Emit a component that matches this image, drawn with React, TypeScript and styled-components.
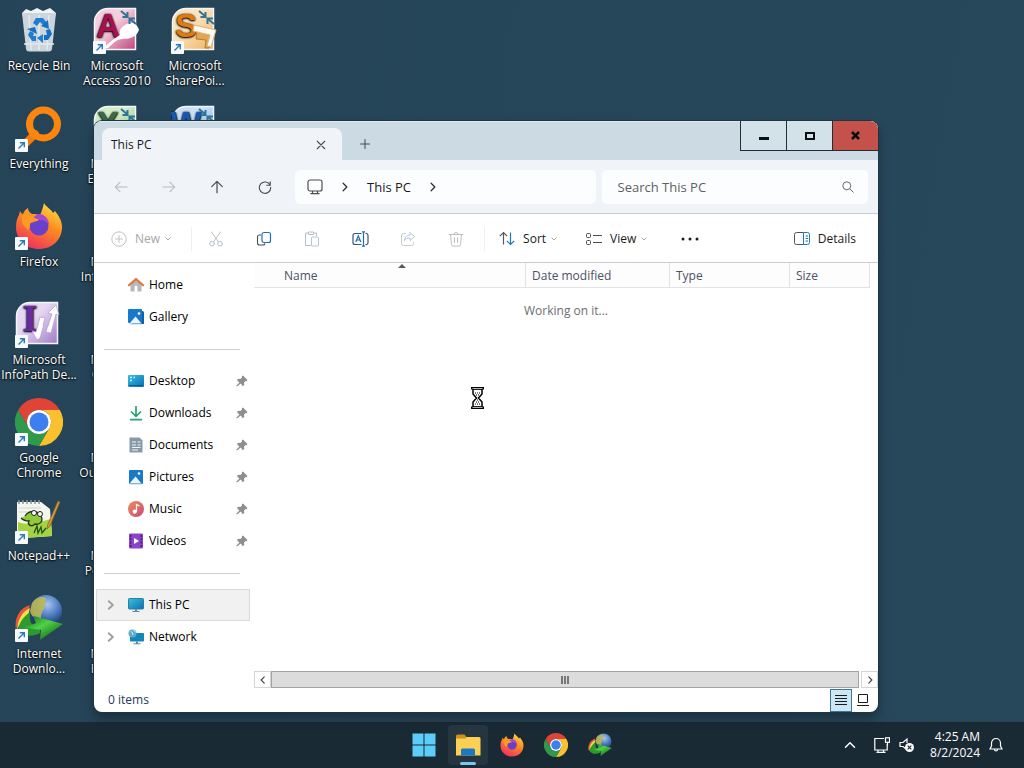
import React, { useState } from 'react'
import styled, { createGlobalStyle, css } from 'styled-components'

const GlobalStyle = createGlobalStyle`
  * {
    box-sizing: border-box;
  }

  body {
    margin: 0;
    font-family: 'Open Sans', 'Noto Sans', sans-serif;
    font-size: 12px;
    line-height: 16px;
    color: #1b1b1b;
    background-color: #264559;
  }

  button, input {
    font: inherit;
    color: inherit;
  }

  svg {
    display: block;
    flex: none;
  }
`;

const Screen = styled.div`
  display: flex;
  flex-direction: column;
  min-height: 100vh;
`;

const Desktop = styled.main`
  position: relative;
  flex: 1;
  background: linear-gradient(100deg, #254458, #27485b);
`;

const IconGrid = styled.div`
  display: grid;
  grid-auto-flow: column;
  grid-template-rows: repeat(7, 98px);
  grid-auto-columns: 78px;
  padding-top: 6px;
`;

const Shortcut = styled.button`
  display: flex;
  flex-direction: column;
  align-items: center;
  justify-content: flex-start;
  gap: 4px;
  padding: 0;
  border: none;
  background: none;
  color: #fff;
  line-height: 15px;
  white-space: pre;
  text-shadow: 0 1px 2px #000, 0 0 2px #000;
`;

const Window = styled.section`
  position: absolute;
  top: 121px;
  right: 146px;
  bottom: 9px;
  left: 94px;
  display: flex;
  flex-direction: column;
  min-width: 640px;
  overflow: hidden;
  border-radius: 8px;
  background-color: #fff;
  box-shadow: 0 0 0 1px #1d3644, 0 6px 12px rgba(0, 0, 0, 0.35);
`;

const TitleBar = styled.header`
  display: flex;
  align-items: flex-start;
  height: 39px;
  padding-left: 8px;
  background-color: #ccdbe3;
  box-shadow: inset 0 1px #dde8ee;
`;

const Tab = styled.div`
  display: flex;
  align-items: center;
  justify-content: space-between;
  width: 240px;
  height: 32px;
  margin-top: 7px;
  padding: 1px 11px 0 9px;
  border-radius: 8px 8px 0 0;
  background-color: #f0f4f9;
`;

const PlainButton = styled.button`
  display: flex;
  align-items: center;
  justify-content: center;
  padding: 0;
  border: none;
  background: none;
`;

const TabButton = styled(PlainButton)`
  width: 20px;
  height: 20px;
`;

const NewTabButton = styled(TabButton)`
  margin: 13px auto 0 13px;
`;

const CaptionButton = styled(PlainButton)<{ $close?: boolean }>`
  width: 46px;
  height: 30px;
  border-bottom: 1px solid #1f2f3a;
  border-left: 1px solid #1f2f3a;
  background-color: ${props => (props.$close ? '#c5524a' : '#d3e1e8')};
`;

const NavRow = styled.div`
  display: flex;
  align-items: center;
  gap: 6px;
  height: 54px;
  padding: 0 10px 0 3px;
  border-bottom: 1px solid #cacdd0;
  background-color: #f0f4f9;
`;

const NavButtons = styled.div`
  display: flex;
`;

const ToolButton = styled(PlainButton)`
  width: 48px;
  height: 32px;
`;

const AddressBar = styled.nav`
  display: flex;
  flex: 276;
  align-items: center;
  height: 34px;
  padding: 0 12px;
  border-radius: 5px;
  background-color: #fcfdfe;
  font-size: 13px;
`;

const Crumb = styled(PlainButton)`
  margin: 0 16px;
`;

const SearchBox = styled.label`
  display: flex;
  flex: 236;
  align-items: center;
  height: 34px;
  padding: 0 14px 0 16px;
  border-radius: 5px;
  background-color: #fcfdfe;
`;

const SearchInput = styled.input`
  flex: 1;
  min-width: 0;
  padding: 0;
  border: none;
  outline: none;
  background: none;
  font-size: 13px;

  &::placeholder {
    color: #5f6063;
    opacity: 1;
  }
`;

const Toolbar = styled.div`
  display: flex;
  align-items: center;
  height: 49px;
  padding: 1px 22px 0 17px;
  border-bottom: 1px solid #cacdd0;
`;

const TextButton = styled(PlainButton)<{ $faded?: boolean }>`
  gap: 4px;
  height: 32px;
  color: ${props => (props.$faded ? '#a5a6a8' : '#1b1b1b')};

  svg:first-child {
    margin-right: 4px;
  }
`;

const ToolGroup = styled.div`
  display: flex;
  gap: 28px;
  margin: 0 18px 0 14px;
`;

const Divider = styled.div<{ $gap: number }>`
  width: 1px;
  height: 24px;
  margin-left: ${props => props.$gap}px;
  background-color: #f0f0f1;
`;

const Spacer = styled.div`
  flex: 1;
`;

const Body = styled.div`
  display: flex;
  flex: 1;
  min-height: 0;
`;

const Sidebar = styled.nav`
  width: 160px;
  padding: 6px 4px 0 2px;
`;

const SideItem = styled.button<{ $selected?: boolean }>`
  display: grid;
  grid-template-columns: 24px 16px 1fr 12px;
  column-gap: 5px;
  align-items: center;
  width: 100%;
  height: 32px;
  padding: 0 1px 0 2px;
  border: 1px solid transparent;
  background: none;
  text-align: left;
  color: #000;

  ${props => props.$selected && css`
    border-color: #d9d9d9;
    background-color: #f1f1f1;
  `}
`;

const ExpanderSlot = styled.span`
  padding-left: 6px;
`;

const SideRule = styled.hr`
  width: 136px;
  height: 1px;
  margin: 16px 8px 15px;
  border: none;
  background-color: #cfcfcf;
`;

const Content = styled.div`
  position: relative;
  display: flex;
  flex: 1;
  flex-direction: column;
  min-width: 0;
`;

const FileTable = styled.table`
  width: calc(100% - 8px);
  table-layout: fixed;
  border-collapse: separate;
  border-spacing: 0;
`;

const HeadCell = styled.th<{ $width?: number; $first?: boolean }>`
  position: relative;
  width: ${props => (props.$width ? props.$width + 'px' : 'auto')};
  height: 25px;
  padding: 1px 0 0 ${props => (props.$first ? 30 : 6)}px;
  border-right: 1px solid #e3e3e6;
  border-bottom: 1px solid #e3e3e6;
  background-color: #fdfdfe;
  font-weight: 400;
  text-align: left;
  color: #4c5067;
`;

const SortMark = styled.svg`
  position: absolute;
  top: 1px;
  left: calc(50% + 8px);
`;

const Message = styled.p`
  flex: 1;
  margin: 15px 0 0;
  text-align: center;
  color: #6d6d6d;
`;

const WaitCursor = styled.svg`
  position: absolute;
  top: 124px;
  left: 217px;
`;

const ScrollBar = styled.div`
  display: flex;
  height: 17px;
`;

const ScrollButton = styled(PlainButton)`
  width: 17px;
  border: 1px solid #d5d5d5;
  background-color: #fff;
`;

const ScrollThumb = styled.div`
  display: flex;
  flex: 1;
  align-items: center;
  justify-content: center;
  margin-right: 2px;
  border: 1px solid #a3a3a3;
  background-color: #dcdcdc;
`;

const StatusBar = styled.footer`
  display: flex;
  align-items: center;
  height: 24px;
  padding: 0 4px 0 14px;
  color: #1e395b;
`;

const StatusText = styled.span`
  margin-right: auto;
`;

const ViewButton = styled(PlainButton)<{ $active: boolean }>`
  width: 22px;
  height: 23px;
  border: 1px solid ${props => (props.$active ? '#3f7896' : 'transparent')};
  background-color: ${props => (props.$active ? '#cde6f5' : 'transparent')};
`;

const Taskbar = styled.footer`
  display: grid;
  grid-template-columns: 1fr auto 1fr;
  align-items: center;
  height: 47px;
  border-top: 1px solid #2d434f;
  background-color: #1a2a35;
  color: #fff;
`;

const TaskButtons = styled.div`
  display: flex;
  grid-column: 2;
  gap: 4px;
`;

const TaskButton = styled(PlainButton)<{ $active?: boolean }>`
  position: relative;
  width: 40px;
  height: 40px;
  border-radius: 4px;
  background-color: ${props => (props.$active ? '#263640' : 'transparent')};

  ${props => props.$active && css`
    &::after {
      content: '';
      position: absolute;
      bottom: 0;
      left: 12px;
      width: 16px;
      height: 3px;
      border-radius: 2px;
      background-color: #7cc4ee;
    }
  `}
`;

const Tray = styled.div`
  display: flex;
  align-items: center;
  justify-content: flex-end;
  gap: 9px;
  padding-right: 21px;
`;

const TrayButton = styled(PlainButton)<{ $spaced?: boolean }>`
  margin-right: ${props => (props.$spaced ? '9px' : '0')};
`;

const Clock = styled.time`
  margin-left: 6px;
  text-align: right;
`;

/* ---------- line icons ---------- */

const Line = ({ d, size = 16, color = '#4a4d50', width = 1 }: any) => (
  <svg width={size} height={size} viewBox="0 0 16 16" fill="none" stroke={color} strokeWidth={width} strokeLinecap="round" strokeLinejoin="round">
    <path d={d} />
  </svg>
);

const Caret = () => (
  <svg width="8" height="6" viewBox="0 0 8 6" fill="none" stroke="#a8a9ab">
    <path d="M1.500 1.500l2.500 2.500 2.500-2.500" />
  </svg>
);

const CrumbArrow = () => <Line size={12} width={1.6} color="#2b2d2f" d="M5.500 3l5 5-5 5" />;

const CopyIcon = () => (
  <svg width="16" height="16" viewBox="0 0 16 16" fill="none">
    <path d="M5 4H3.200A1.800 1.800 0 0 0 1.500 5.800V12a2 2 0 0 0 2 2H7a2 2 0 0 0 2-1.500" stroke="#44505c" strokeWidth="1.100" />
    <rect x="6" y="1.500" width="8.500" height="10" rx="2" stroke="#1f6fb0" strokeWidth="1.200" />
  </svg>
);

const PasteIcon = () => (
  <svg width="16" height="16" viewBox="0 0 16 16" fill="none" stroke="#bcbec1">
    <path d="M4.500 2H1.500v12.500H7M9.500 2h3v3M4.500 1h5v2.500h-5z" />
    <rect x="7.500" y="6" width="7" height="9" rx="1" stroke="#b4c4d4" />
  </svg>
);

const RenameIcon = () => (
  <svg width="17" height="16" viewBox="0 0 17 16" fill="none" stroke="#1f6fb0" strokeWidth="1.200">
    <path d="M9.500 2.500H3a2 2 0 0 0-2 2v7a2 2 0 0 0 2 2h6.500M13.500 2.500a2 2 0 0 1 2.500 2v7a2 2 0 0 1-2.500 2" stroke="#34577a" />
    <path d="M11.500 1v14M10 .8h3M10 15.200h3M3.800 11L6.300 4.800 8.800 11M4.600 9h3.400" />
  </svg>
);

const ShareIcon = () => (
  <svg width="16" height="16" viewBox="0 0 16 16" fill="none" strokeLinejoin="round">
    <path d="M6 2.500H3.500a2 2 0 0 0-2 2v8a2 2 0 0 0 2 2h8a2 2 0 0 0 2-2V11" stroke="#c6cbd0" />
    <path d="M10 1.500l4.500 4-4.500 4V7C7 7 5.500 8 4.300 9.800 4.500 6.500 6.500 4.200 10 4z" stroke="#b4cbe0" />
  </svg>
);

const TrashIcon = () => (
  <svg width="16" height="16" viewBox="0 0 16 16" fill="none" stroke="#bcbec1">
    <path d="M1 3.500h14M6 3.500a2 2 0 0 1 4 0M2.500 3.500l1 10a1.500 1.500 0 0 0 1.500 1.500h6a1.500 1.500 0 0 0 1.500-1.500l1-10M6.500 6.500v5.500M9.500 6.500v5.500" />
  </svg>
);

const CutIcon = () => (
  <svg width="16" height="16" viewBox="0 0 16 16" fill="none" stroke="#bcbec1" strokeLinecap="round">
    <path d="M3.500 1l7 10M12.500 1l-7 10" />
    <circle cx="4" cy="12.700" r="2.300" stroke="#b4c4d4" />
    <circle cx="12" cy="12.700" r="2.300" stroke="#b4c4d4" />
  </svg>
);

const SortIcon = () => (
  <svg width="16" height="16" viewBox="0 0 16 16" fill="none" strokeWidth="1.200">
    <path d="M4.500 13.500v-12M.800 5.200l3.700-3.700 3.700 3.700" stroke="#55595e" />
    <path d="M11.500 1.500v12M7.800 9.800l3.700 3.700 3.700-3.700" stroke="#1f78bd" />
  </svg>
);

const ViewIcon = () => (
  <svg width="16" height="14" viewBox="0 0 16 14" fill="none" stroke="#4a4d50">
    <rect x=".5" y="1.500" width="4" height="4" rx="1" />
    <rect x=".5" y="8.500" width="4" height="4" rx="1" />
    <path d="M7 3.500h9M7 10.500h9" />
  </svg>
);

const DetailsIcon = () => (
  <svg width="16" height="13" viewBox="0 0 16 13" fill="none">
    <path d="M9.500.5H2.500a2 2 0 0 0-2 2v8a2 2 0 0 0 2 2h7" stroke="#4a5560" />
    <path d="M9.500.5h4a2 2 0 0 1 2 2v8a2 2 0 0 1-2 2h-4zM11.500 4h2.500M11.500 6.500h2.500M11.500 9h2.500" stroke="#1f78bd" />
  </svg>
);

const PcOutlineIcon = () => (
  <svg width="16" height="16" viewBox="0 0 16 16" fill="none" stroke="#4a4d50" strokeWidth="1.200">
    <rect x="1" y="1" width="14" height="11" rx="2" />
    <path d="M5.500 12v2.500M10.500 12v2.500M3.500 14.700h9" />
  </svg>
);

/* ---------- sidebar icons ---------- */

const HomeIcon = () => (
  <svg width="16" height="16" viewBox="0 0 16 16">
    <path d="M2.500 7L8 2.500 13.500 7v7.500h-4V10a1.500 1.500 0 0 0-3 0v4.500h-4z" fill="#b5b9bd" />
    <path d="M1 8.300L8 2l7 6.300" fill="none" stroke="#e0763f" strokeWidth="2.200" strokeLinecap="round" strokeLinejoin="round" />
  </svg>
);

const PictureIcon = ({ stacked }: { stacked?: boolean }) => (
  <svg width="16" height="16" viewBox="0 0 16 16">
    {stacked && <path d="M4 2h10.500a1.500 1.500 0 0 1 1.500 1.500V15H4z" fill="#0f5ea8" />}
    <rect y={stacked ? 0 : 1} x={stacked ? 0 : 1} width="14" height="14" rx="1" fill="#1679cc" />
    <path d="M1.500 14.500L7.500 7.500l6 7z" fill="#eef7fd" />
    <path d="M1.500 14.500h12.500v.8H1.500z" fill="#7eb6e0" />
    <circle cx="11" cy="4.500" r="1.300" fill="#fff" />
  </svg>
);

const DesktopIcon = () => (
  <svg width="16" height="16" viewBox="0 0 16 16">
    <defs>
      <linearGradient id="desk" x1="0" y1="0" x2="1" y2="1">
        <stop offset="0" stopColor="#34bfe0" />
        <stop offset="1" stopColor="#0a70b8" />
      </linearGradient>
    </defs>
    <rect y="2" width="16" height="12" rx="1" fill="url(#desk)" />
    <path d="M2 4.500h2M2 7.500h2M5.500 4.500h1.500" stroke="#d9f5fd" strokeWidth="1.500" />
    <path d="M1 12.500h14" stroke="#075c98" />
  </svg>
);

const DownloadIcon = () => (
  <svg width="16" height="16" viewBox="0 0 16 16" fill="none" stroke="#22a672" strokeWidth="1.700">
    <path d="M8 1v10M3 6.500L8 11.300l5-4.800M2 14.700h12" />
  </svg>
);

const DocumentIcon = () => (
  <svg width="16" height="16" viewBox="0 0 16 16">
    <path d="M1.500.5h10l3 3v12h-13z" fill="#8699aa" />
    <path d="M4 5h4M4 8h4M9.500 5h3M9.500 8h3M4 10.500h8.500M4 13h6" stroke="#f2f6fa" strokeWidth="1.200" />
  </svg>
);

const MusicIcon = () => (
  <svg width="16" height="16" viewBox="0 0 16 16">
    <defs>
      <linearGradient id="music" x1="0" y1="0" x2="1" y2="1">
        <stop offset="0" stopColor="#ee8a5c" />
        <stop offset="1" stopColor="#c94a77" />
      </linearGradient>
    </defs>
    <circle cx="8" cy="8" r="8" fill="url(#music)" />
    <path d="M8.500 10.500V3.500l3 1.500" fill="none" stroke="#fff" strokeWidth="1.300" />
    <circle cx="6.700" cy="10.700" r="2.100" fill="#fff" />
  </svg>
);

const VideoIcon = () => (
  <svg width="16" height="16" viewBox="0 0 16 16">
    <rect x="1" y=".5" width="14" height="15" rx="1" fill="#8a45c8" />
    <path d="M2.700 2v12M13.300 2v12" stroke="#4d1f86" strokeWidth="1.600" strokeDasharray="2 1.300" />
    <path d="M6 5l5 3-5 3z" fill="#fff" />
  </svg>
);

const MonitorIcon = () => (
  <svg width="16" height="16" viewBox="0 0 16 16">
    <defs>
      <linearGradient id="mon" x1="0" y1="0" x2="1" y2="1">
        <stop offset="0" stopColor="#38c3dc" />
        <stop offset="1" stopColor="#0d6fae" />
      </linearGradient>
    </defs>
    <rect x=".5" y="1.500" width="15" height="10.500" rx=".8" fill="url(#mon)" stroke="#2b7fa5" />
    <path d="M7 12h2v2h2.500v1h-7v-1H7z" fill="#5b8aa3" />
  </svg>
);

const NetworkIcon = () => (
  <svg width="16" height="16" viewBox="0 0 16 16">
    <rect x="2" y="4" width="14" height="8.500" rx=".8" fill="#1486b8" />
    <circle cx="4.500" cy="4.500" r="4" fill="#5dabc8" />
    <path d="M2.500 2.500c2 .5 3 2 2 3.500M5.500 1c1 1.500 2 2 3 2" stroke="#d7f2f7" fill="none" />
    <path d="M8 12.500h2v1.700h2.500v1h-7v-1H8z" fill="#5b8aa3" />
  </svg>
);

const PinIcon = () => (
  <svg width="12" height="12" viewBox="0 0 12 12" fill="#8b8e91">
    <path d="M7 .6l4.500 4.500-1 1.200-1-.2-1.500 1.600.2 2.200L7 11.200 4.600 8.600 1.200 11.600l-.9-.9L3.400 7.400.9 5l1.300-1.300 2.200.2L6 2.400l-.2-.9z" />
  </svg>
);

/* ---------- desktop icons ---------- */

const ShortcutBadge = () => (
  <g>
    <rect y="35" width="13" height="13" rx="1" fill="#f7fafc" />
    <path d="M3.500 44.500l5.500-5.500M4.800 38.700h4.500v4.500" fill="none" stroke="#2f78b5" strokeWidth="1.400" />
  </g>
);

const FirefoxArt = ({ size }: { size: number }) => (
  <svg width={size} height={size} viewBox="0 0 48 48">
    <defs>
      <linearGradient id="ffa" x1=".8" y1="0" x2=".3" y2="1">
        <stop offset="0" stopColor="#ffdf43" />
        <stop offset=".45" stopColor="#ff8a1f" />
        <stop offset="1" stopColor="#ee2f62" />
      </linearGradient>
    </defs>
    <path d="M29 1c2 4 7 6 9 10l2-2c4 5 7 10 7 16 0 13-10 22-23 22S1 38 1 25c0-5 1-9 3-12l1-4c1 2 2 3 3 3 1-3 3-5 5-6 0 3 2 5 4 6 3 0 6 0 8 1 2-4 3-8 4-12z" fill="url(#ffa)" />
    <circle cx="24" cy="24" r="9.500" fill="#6a3fc9" />
    <path d="M25 12c5 1 9 5 9 11-2-3-5-5-9-5-3 0-5 0-7-2 2-2 4-4 7-4z" fill="#a24bd0" />
    <path d="M7 14c3-2 6-2 9 0l8 4c-3 2-8 2-9 4 0 2 0 4-2 6-5-4-7-9-6-14z" fill="#ff9a24" />
  </svg>
);

const ChromeArt = ({ size }: { size: number }) => (
  <svg width={size} height={size} viewBox="0 0 48 48">
    <path d="M3.200 12A24 24 0 0 1 44.800 12H24a12 12 0 0 0-10.400 18z" fill="#df4437" />
    <path d="M44.800 12A24 24 0 0 1 24 48l10.400-18A12 12 0 0 0 24 12z" fill="#fbc02d" />
    <path d="M24 48A24 24 0 0 1 3.200 12l10.400 18A12 12 0 0 0 34.400 30z" fill="#2f9a4b" />
    <circle cx="24" cy="24" r="12" fill="#fff" />
    <circle cx="24" cy="24" r="9.500" fill="#3d7ff0" />
  </svg>
);

const IdmArt = ({ size }: { size: number }) => (
  <svg width={size} height={size} viewBox="0 0 48 48">
    <defs>
      <radialGradient id="globe" cx=".55" cy=".3" r=".7">
        <stop offset="0" stopColor="#a9c6ec" />
        <stop offset=".45" stopColor="#5585c8" />
        <stop offset="1" stopColor="#152f66" />
      </radialGradient>
      <linearGradient id="arrow" x1="0" y1="0" x2="1" y2="1">
        <stop offset="0" stopColor="#0e5a1c" />
        <stop offset=".45" stopColor="#4fd246" />
        <stop offset="1" stopColor="#07420f" />
      </linearGradient>
    </defs>
    <circle cx="31" cy="17" r="16" fill="url(#globe)" />
    <path d="M17 9c4-6 10-7 14-5-1 4 0 6-2 9-1 4-3 6-3 11-6 1-10-2-11-7z" fill="#c2bb4e" opacity=".85" />
    <path d="M15 11C4 14-1 25 1 36c2-8 5-12 11-13 1-5 2-8 3-12z" fill="#e8563b" />
    <path d="M15 14C7 18 3 25 2 36c3-7 6-9 11-10 0-5 1-8 2-12z" fill="#f5e04a" />
    <path d="M15 18c-7 5-11 11-12 18 6 7 14 7 22 3v-5c-8 0-11-6-10-16z" fill="#2c9a2d" />
    <path d="M19 22l29 8-23 16 1-10c-7-1-13-2-20-3 6-1 11-2 15-4-1-2-2-4-2-7z" fill="url(#arrow)" />
  </svg>
);

const BinArt = () => (
  <svg width="48" height="48" viewBox="0 0 48 48">
    <path d="M7 7l4-4 5 2 6-3 6 3 7-3 6 5-1 4H8z" fill="#eef3f6" />
    <path d="M7 7h34l-4 36a3 3 0 0 1-3 2.500H14a3 3 0 0 1-3-2.500z" fill="#ccd5db" />
    <path d="M14 9l2 35M24 9v35M34 9l-2 35M9 38h30" stroke="#e3e9ec" strokeWidth="1.500" />
    <path d="M18 17l3-5h7l4 5-4 2-3-3-3 4z" fill="#1e7fd0" />
    <path d="M33 14l1 9-8-3zM31 24l4-1 2 5-4 6h-4v-5h3z" fill="#1670c2" />
    <path d="M28 28v9l-6-5zM21 30v5h-4l-4-6 2-4 4 2-1 3z" fill="#1e7fd0" />
    <path d="M12 23l8-2 2 7z" fill="#1670c2" />
  </svg>
);

const EverythingArt = () => (
  <svg width="48" height="48" viewBox="0 0 48 48">
    <path d="M20 30L6 44" stroke="#f57c0a" strokeWidth="8" strokeLinecap="round" />
    <circle cx="28.500" cy="20" r="14" fill="none" stroke="#fa850f" strokeWidth="7" />
    <ShortcutBadge />
  </svg>
);

const NotepadArt = () => (
  <svg width="48" height="48" viewBox="0 0 48 48">
    <path d="M2 6h24l9 7 2 27-28 2H2z" fill="#f4f7ee" />
    <path d="M3 26c10 4 22 0 33-3l1 17-28 2H3z" fill="#a4d443" />
    <path d="M4 4v4M8 4v4M12 4v4M16 4v4M20 4v4M24 4v4" stroke="#8c9396" strokeWidth="1.500" />
    <path d="M4 12h22M4 16h22" stroke="#ccd5da" />
    <path d="M10 20c4-6 12-6 16 0 3 6-2 9-6 8-4 4-8 0-6-3-4 0-6-1-8-3" fill="#8fca3d" stroke="#273413" strokeWidth="1.300" />
    <circle cx="19" cy="17" r="2.500" fill="#fff" stroke="#222" />
    <circle cx="25" cy="18" r="2.500" fill="#fff" stroke="#222" />
    <path d="M19 37l3-7 1 7 3-6 1 6 4-5" fill="none" stroke="#24501a" strokeWidth="1.300" />
    <path d="M43 5l2 1-10 24-3 3 1-5z" fill="#d99a38" stroke="#7d5a25" strokeWidth=".7" />
    <ShortcutBadge />
  </svg>
);

const officeArts: any = {
  A: { light: '#f6cfde', mid: '#c2457c', ink: '#a8104f', extra: <path d="M11 42c5-6 11-10 16-13-2-6 4-11 10-12 4-1 8 3 9 7-2 6-8 9-16 9-7 0-10 5-15 9z" fill="#fff" /> },
  S: { light: '#fbe3bd', mid: '#efb25e', ink: '#e0790f', extra: <g><path d="M25 33l10 1-1 8h4l4-15-16-2z" fill="#e0a652" stroke="#a9691b" strokeWidth=".8" /><path d="M23 19l22 5-5 17-4-1 3-11-17-4z" fill="#fffaf0" stroke="#d9b47a" /></g> },
  X: { light: '#d5ecc8', mid: '#82bd6d', ink: '#3c6b45', extra: null },
  W: { light: '#cbdff6', mid: '#6c9fdb', ink: '#1a57ae', extra: null },
  I: { light: '#e6d8f2', mid: '#a07ac8', ink: '#6a2b9e', extra: <path d="M22 40l-5-9 4 1 4-15 5 1-2 7 5 1 4-12-4-1 8-8 3 10-3-1-5 19-5-1 2-7-4-1-4 14z" fill="#fff" stroke="#b99ad8" strokeWidth=".7" /> },
};

const OfficeArt = ({ letter }: { letter: string }) => {
  const { light, mid, ink, extra } = officeArts[letter];
  return (
    <svg width="48" height="48" viewBox="0 0 48 48">
      <defs>
        <linearGradient id={'office' + letter} x1="0" y1="0" x2="1" y2="1">
          <stop offset="0" stopColor={light} />
          <stop offset=".4" stopColor={light} />
          <stop offset="1" stopColor={mid} />
        </linearGradient>
      </defs>
      <path d="M15 2.500h27.500v41h-41V16A13.500 13.500 0 0 1 15 2.500z" fill={'url(#office' + letter + ')'} stroke="#f3f6f8" strokeWidth="1.500" />
      <text x="15" y="31" textAnchor="middle" fontFamily={letter === 'I' ? 'DejaVu Serif, serif' : 'Liberation Sans, sans-serif'} fontWeight="700" fontSize="33" fill={ink}>{letter}</text>
      {extra}
      {letter !== 'I' && (
        <path d="M28 5l6 5M34.500 6v5h-5M43 18l-6-5M36.500 18v-5.500h5.500" fill="none" stroke="#2f7599" strokeWidth="2" />
      )}
      <ShortcutBadge />
    </svg>
  );
};

const Badged = ({ children }: { children: React.ReactNode }) => (
  <svg width="48" height="48" viewBox="0 0 48 48">
    {children}
    <ShortcutBadge />
  </svg>
);

const WindowsArt = () => (
  <svg width="24" height="24" viewBox="0 0 24 24">
    <path d="M.5.5h11v11H.5zM12.500.5h11v11h-11zM.5 12.500h11v11H.5zM12.500 12.500h11v11h-11z" fill="#5ccdf8" />
  </svg>
);

const FolderArt = () => (
  <svg width="26" height="24" viewBox="0 0 26 24">
    <path d="M1 3a1.500 1.500 0 0 1 1.500-1.500h7l2 2.500H12v4H1z" fill="#d18f1a" />
    <path d="M1 5.500h9l2-1.500h12a1.500 1.500 0 0 1 1.500 1.500V22.500H1z" fill="#fcd052" />
    <path d="M6 22.500V17a1.500 1.500 0 0 1 1.500-1.500h11A1.500 1.500 0 0 1 20 17v5.500z" fill="#1b78c4" />
  </svg>
);

const desktopItems = [
  { label: 'Recycle Bin', art: <BinArt /> },
  { label: 'Everything', art: <EverythingArt /> },
  { label: 'Firefox', art: <Badged><FirefoxArt size={48} /></Badged> },
  { label: 'Microsoft\nInfoPath De...', art: <OfficeArt letter="I" /> },
  { label: 'Google\nChrome', art: <Badged><ChromeArt size={48} /></Badged> },
  { label: 'Notepad++', art: <NotepadArt /> },
  { label: 'Internet\nDownlo...', art: <Badged><IdmArt size={48} /></Badged> },
  { label: 'Microsoft\nAccess 2010', art: <OfficeArt letter="A" /> },
  { label: 'Microsoft\nExcel 2010', art: <OfficeArt letter="X" /> },
  { label: 'Microsoft\nInfoPath Fil...', art: <OfficeArt letter="I" /> },
  { label: 'Microsoft\nOneNote', art: <OfficeArt letter="I" /> },
  { label: 'Microsoft\nOutlook 2010', art: <OfficeArt letter="S" /> },
  { label: 'Microsoft\nPowerPoint', art: <OfficeArt letter="S" /> },
  { label: 'Microsoft\nPublisher', art: <OfficeArt letter="W" /> },
  { label: 'Microsoft\nSharePoi...', art: <OfficeArt letter="S" /> },
  { label: 'Microsoft\nWord 2010', art: <OfficeArt letter="W" /> },
];

const topPlaces = [
  { name: 'Home', icon: <HomeIcon /> },
  { name: 'Gallery', icon: <PictureIcon stacked /> },
];

const pinnedPlaces = [
  { name: 'Desktop', icon: <DesktopIcon />, pinned: true },
  { name: 'Downloads', icon: <DownloadIcon />, pinned: true },
  { name: 'Documents', icon: <DocumentIcon />, pinned: true },
  { name: 'Pictures', icon: <PictureIcon />, pinned: true },
  { name: 'Music', icon: <MusicIcon />, pinned: true },
  { name: 'Videos', icon: <VideoIcon />, pinned: true },
];

const devices = [
  { name: 'This PC', icon: <MonitorIcon />, expandable: true },
  { name: 'Network', icon: <NetworkIcon />, expandable: true },
];

function Explorer() {
  const [selected, setSelected] = useState('This PC');
  const [search, setSearch] = useState('');
  const [view, setView] = useState('details');

  const renderPlace = (place: any) => (
    <SideItem key={place.name} $selected={selected === place.name} onClick={() => setSelected(place.name)}>
      <ExpanderSlot>
        {place.expandable && <Line size={12} color="#a0a0a0" width={2.6} d="M5 3l5.500 5-5.500 5" />}
      </ExpanderSlot>
      {place.icon}
      <span>{place.name}</span>
      {place.pinned && <PinIcon />}
    </SideItem>
  );

  return (
    <Window>
      <TitleBar>
        <Tab>
          This PC
          <TabButton aria-label="Close tab"><Line size={12} width={1.5} d="M3 3l10 10M13 3L3 13" /></TabButton>
        </Tab>
        <NewTabButton aria-label="New tab"><Line size={12} width={1.4} d="M8 2v12M2 8h12" /></NewTabButton>
        <CaptionButton aria-label="Minimize">
          <svg width="10" height="10"><path d="M0 6h10v3H0z" fill="#0a0f14" /></svg>
        </CaptionButton>
        <CaptionButton aria-label="Maximize">
          <svg width="10" height="8" fill="none" stroke="#0a0f14" strokeWidth="2"><path d="M1 1h8v6H1z" /></svg>
        </CaptionButton>
        <CaptionButton $close aria-label="Close">
          <svg width="9" height="9" fill="none" stroke="#0a0f14" strokeWidth="2.500"><path d="M1 1l7 7M8 1L1 8" /></svg>
        </CaptionButton>
      </TitleBar>
      <NavRow>
        <NavButtons>
          <ToolButton aria-label="Back"><Line size={14} color="#b4b8bc" width={1.2} d="M15 8H1.500M7 2.500L1.500 8 7 13.500" /></ToolButton>
          <ToolButton aria-label="Forward"><Line size={14} color="#b4b8bc" width={1.2} d="M1 8h13.500M9 2.500L14.500 8 9 13.500" /></ToolButton>
          <ToolButton aria-label="Up"><Line size={14} width={1.400} d="M8 14.500v-13M2 7.500l6-6 6 6" /></ToolButton>
          <ToolButton aria-label="Refresh"><Line size={14} width={1.300} d="M13.800 5.800A6.500 6.500 0 1 0 14.500 8.500M14 2v4h-4" /></ToolButton>
        </NavButtons>
        <AddressBar aria-label="Address">
          <PcOutlineIcon />
          <Crumb aria-label="Locations"><CrumbArrow /></Crumb>
          <PlainButton>This PC</PlainButton>
          <Crumb aria-label="Folders"><CrumbArrow /></Crumb>
        </AddressBar>
        <SearchBox>
          <SearchInput
            type='text'
            aria-label='Search This PC'
            placeholder='Search This PC'
            value={search}
            onChange={(e) => setSearch(e.target.value)}
          />
          <svg width="12" height="12" viewBox="0 0 12 12" fill="none" stroke="#66696c">
            <circle cx="4.800" cy="4.800" r="4" />
            <path d="M7.800 7.800l3.700 3.700" />
          </svg>
        </SearchBox>
      </NavRow>
      <Toolbar>
        <TextButton $faded>
          <Line color="#bfc1c4" d="M8 .8a7.200 7.200 0 1 0 0 14.400A7.200 7.200 0 1 0 8 .8M8 4.500v7M4.500 8h7" />
          New
          <Caret />
        </TextButton>
        <Divider $gap={19} />
        <ToolButton aria-label="Cut"><CutIcon /></ToolButton>
        <ToolButton aria-label="Copy"><CopyIcon /></ToolButton>
        <ToolButton aria-label="Paste"><PasteIcon /></ToolButton>
        <ToolButton aria-label="Rename"><RenameIcon /></ToolButton>
        <ToolButton aria-label="Share"><ShareIcon /></ToolButton>
        <ToolButton aria-label="Delete"><TrashIcon /></ToolButton>
        <Divider $gap={4} />
        <ToolGroup>
          <TextButton><SortIcon />Sort<Caret /></TextButton>
          <TextButton><ViewIcon />View<Caret /></TextButton>
        </ToolGroup>
        <ToolButton aria-label="See more">
          <svg width="18" height="4" fill="#1b1b1b"><circle cx="2" cy="2" r="1.500" /><circle cx="9" cy="2" r="1.500" /><circle cx="16" cy="2" r="1.500" /></svg>
        </ToolButton>
        <Spacer />
        <TextButton><DetailsIcon />Details</TextButton>
      </Toolbar>
      <Body>
        <Sidebar aria-label="Places">
          {topPlaces.map(renderPlace)}
          <SideRule />
          {pinnedPlaces.map(renderPlace)}
          <SideRule />
          {devices.map(renderPlace)}
        </Sidebar>
        <Content>
          <FileTable>
            <thead>
              <tr>
                <HeadCell $first>
                  Name
                  <SortMark width="8" height="4"><path d="M4 0l4 4H0z" fill="#55585e" /></SortMark>
                </HeadCell>
                <HeadCell $width={144}>Date modified</HeadCell>
                <HeadCell $width={120}>Type</HeadCell>
                <HeadCell $width={80}>Size</HeadCell>
              </tr>
            </thead>
          </FileTable>
          <Message>Working on it...</Message>
          <WaitCursor width="13" height="22" viewBox="0 0 13 22">
            <path d="M2 2h9v5l-3.500 4L11 15v5H2v-5l3.500-4L2 7z" fill="#fff" stroke="#000" strokeWidth="1.500" />
            <path d="M0 1.200h13M0 20.800h13" stroke="#000" strokeWidth="2.400" />
            <path d="M1.500 1.500h10M1.500 20.500h10" stroke="#fff" strokeWidth=".7" />
            <path d="M4 6h5M5 8h3M6 13h1M5 15h3M4 17h5" stroke="#000" strokeDasharray="1 1" />
          </WaitCursor>
          <ScrollBar>
            <ScrollButton aria-label="Scroll left"><Line size={10} width={2} d="M10 3L5 8l5 5" /></ScrollButton>
            <ScrollThumb>
              <svg width="8" height="8" stroke="#555" strokeWidth="1.500"><path d="M1 0v8M4 0v8M7 0v8" /></svg>
            </ScrollThumb>
            <ScrollButton aria-label="Scroll right"><Line size={10} width={2} d="M6 3l5 5-5 5" /></ScrollButton>
          </ScrollBar>
        </Content>
      </Body>
      <StatusBar>
        <StatusText>0 items</StatusText>
        <ViewButton $active={view === 'details'} aria-label="Details view" onClick={() => setView('details')}>
          <svg width="12" height="11" stroke="#1b1b1b"><path d="M0 .5h12M0 3.500h12M0 6.500h12M0 9.500h12" /></svg>
        </ViewButton>
        <ViewButton $active={view === 'icons'} aria-label="Large icons view" onClick={() => setView('icons')}>
          <svg width="12" height="12" fill="none" stroke="#1b1b1b"><path d="M1.500.5h9v8h-9zM0 11.500h12" /></svg>
        </ViewButton>
      </StatusBar>
    </Window>
  )
}

function App() {
  return (
    <Screen>
      <GlobalStyle />
      <Desktop>
        <IconGrid>
          {desktopItems.map(item => (
            <Shortcut key={item.label}>
              {item.art}
              {item.label}
            </Shortcut>
          ))}
        </IconGrid>
        <Explorer />
      </Desktop>
      <Taskbar>
        <TaskButtons>
          <TaskButton aria-label="Start"><WindowsArt /></TaskButton>
          <TaskButton $active aria-label="File Explorer"><FolderArt /></TaskButton>
          <TaskButton aria-label="Firefox"><FirefoxArt size={24} /></TaskButton>
          <TaskButton aria-label="Google Chrome"><ChromeArt size={24} /></TaskButton>
          <TaskButton aria-label="Internet Download Manager"><IdmArt size={24} /></TaskButton>
        </TaskButtons>
        <Tray>
          <TrayButton $spaced aria-label="Show hidden icons"><Line size={12} color="#fff" width={2} d="M2 11l6-6 6 6" /></TrayButton>
          <TrayButton aria-label="Network">
            <svg width="16" height="16" viewBox="0 0 16 16" fill="none" stroke="#fff" strokeWidth="1.200">
              <path d="M10 1.500H.8v11.500h12.400V7M4 13v2.500M9.500 13v2.500M2.500 15.400h9" />
              <rect x="11.500" y=".8" width="4" height="4.500" />
              <path d="M13.500 5.500v3" />
            </svg>
          </TrayButton>
          <TrayButton aria-label="Volume">
            <svg width="16" height="16" viewBox="0 0 16 16" fill="none" stroke="#fff" strokeWidth="1.200">
              <path d="M7 12L4 9.500H1v-4h3L8 2v4" />
              <circle cx="10.500" cy="10.500" r="4.500" fill="#fff" stroke="none" />
              <path d="M8.700 8.700l3.600 3.600M12.300 8.700l-3.600 3.600" stroke="#1a2a35" />
            </svg>
          </TrayButton>
          <Clock>4:25 AM<br />8/2/2024</Clock>
          <TrayButton aria-label="Notifications">
            <svg width="14" height="16" viewBox="0 0 14 16" fill="none" stroke="#fff" strokeWidth="1.200">
              <path d="M7 1.500a4.500 4.500 0 0 0-4.500 4.500v3L1 12h12l-1.500-3V6A4.500 4.500 0 0 0 7 1.500zM5.500 12.500a1.500 1.500 0 0 0 3 0" />
            </svg>
          </TrayButton>
        </Tray>
      </Taskbar>
    </Screen>
  )
}

export default App
